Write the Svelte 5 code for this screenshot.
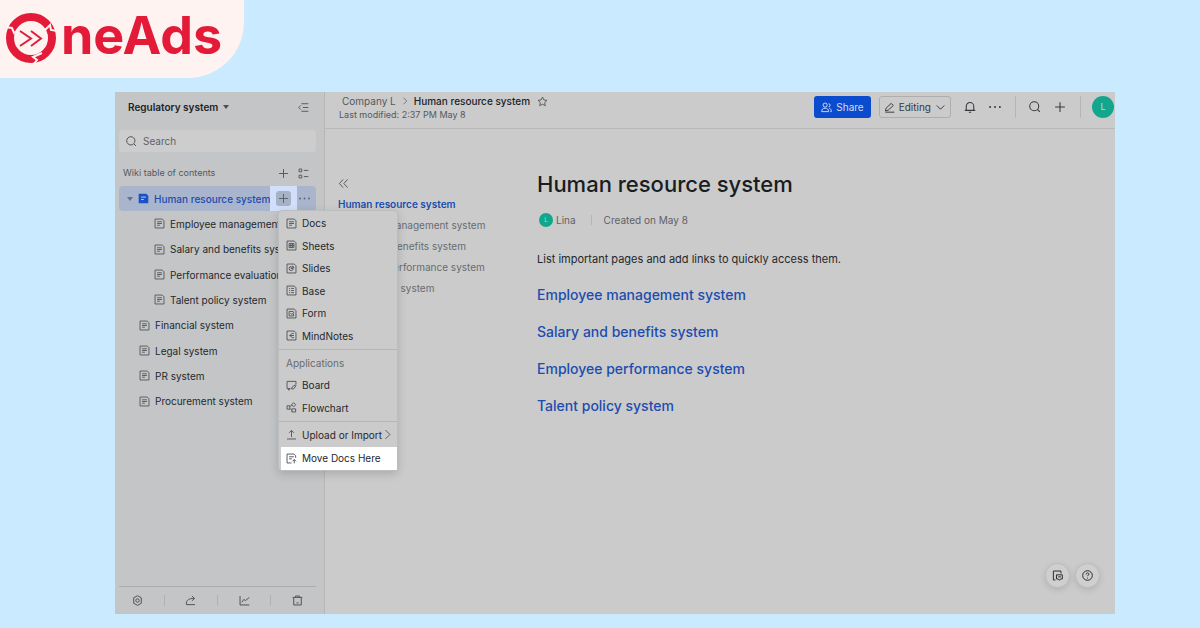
<script lang="ts">
	type TreePage = { title: string; nested?: boolean };

	const icons: Record<string, string> = {
		doc: 'M1.5 1.5h10.5l2.5 2.5v10.5h-13zM4.5 5.5h7M4.5 8h7M4.5 10.5h4',
		sheet: 'M1.5 1.5h10.5l2.5 2.5v10.5h-13zM4.5 5h7v6h-7zM4.5 8h7M7 5v6M9.3 5v6',
		slides: 'M1.5 1.5h10.5l2.5 2.5v10.5h-13zM7.5 5a3 3 0 1 0 3 3h-3zM9.5 4.5a3 3 0 0 1 2 2h-2z',
		base: 'M1.5 1.5h10.5l2.5 2.5v10.5h-13zM4.5 5h1.5M7.5 5h4M4.5 8h1.5M7.5 8h4M4.5 11h1.5M7.5 11h4',
		form: 'M1.5 1.5h10.5l2.5 2.5v10.5h-13zM11 8v3.5H4.5V5H11M6.5 7.5l2 2L11.5 6',
		mind: 'M1.5 1.5h10.5l2.5 2.5v10.5h-13zM11.5 5H9L5.5 8 9 11h2.5M5 8h6.5',
		board: 'M6.5 12.5H1.5V2h13v4.5M2.5 12.5L4.500 15v-2.500M8 13l1-3 4.500-3 1 1.500L11 13z',
		flow: 'M1.5 5.5h4v5h-4zM5.5 7l3-3M5.5 9l3 3M11 1l3 3-3 3-3-3zM8.5 10H14v4.5H8.5z',
		upload: 'M8 11.5V2M4.5 5.5L8 2l3.5 3.5M1.5 14.5h13',
		move: 'M14 7V4l-2.5-2.5h-10v13H8M4.5 5.5h7M4.5 8.5h4M12 15V9.5M9.5 12L12 9.5l2.5 2.5',
		plus: 'M8 1.5v13M1.5 8h13',
		search: 'M13 7a6 6 0 1 1-12 0 6 6 0 0 1 12 0zM11.5 11.5l3 3',
		fold: 'M5 2.5h10M7 8h8M5 13.5h10M4 5L1 8l3 3',
		outline: 'M1.5 1.5h4v4h-4zM1.5 10.5h4v4h-4zM8.5 3.5H15M8.5 12.5H15',
		left: 'M7.5 2L2 8l5.5 6M14 2L8.5 8l5.5 6',
		right: 'M5 1.5L11.5 8 5 14.5',
		down: 'M2.5 5L8 10.5 13.5 5',
		star: 'M8 1.5l2 4.2 4.5.6-3.3 3.2.8 4.6L8 11.9l-4 2.2.8-4.6L1.5 6.3 6 5.7z',
		share: 'M9 4.5a3 3 0 1 1-6 0 3 3 0 0 1 6 0zM1 14c0-3.500 2-5 5-5s5 1.500 5 5zM11 2.500a2.200 2.200 0 0 1 0 4.500M12 9c2 .5 3 2 3 5h-1.500',
		pen: 'M2 13l1-4 7.500-7 3 3L6 12zM2 14.800h13',
		bell: 'M3 12.500V7a5 5 0 0 1 10 0v5.500M1 12.500h14M6.500 15h3',
		gear: 'M8 1l5.500 3v8L8 15l-5.500-3V4zM10.500 8a2.500 2.500 0 1 1-5 0 2.500 2.500 0 0 1 5 0z',
		forward: 'M2 10.500v3.500h12.500M2 11c1-4 4-6 11-6M10 1.500L14 5l-4 3.500',
		chart: 'M1.500 1.500v13h13.500M4 10.500l3-4 2.500 1.500L15 3.500',
		trash: 'M1 3.500h14M5 3V1.500h6V3M2.500 4v10.500h11V4M6.500 11.500h3',
		note: 'M5 14.500H2v-13h11V5M6.500 7h8.500v6h-2.500L10.800 15 9 13H6.500zM9 10h4',
		help: 'M15 8A7 7 0 1 1 1 8a7 7 0 0 1 14 0zM6 6.500c0-3 4-3 4-.5 0 1.500-2 1.500-2 3M8 11.200v1.300'
	};

	const pages: TreePage[] = [
		{ title: 'Employee management system', nested: true },
		{ title: 'Salary and benefits system', nested: true },
		{ title: 'Performance evaluation system', nested: true },
		{ title: 'Talent policy system', nested: true },
		{ title: 'Financial system' },
		{ title: 'Legal system' },
		{ title: 'PR system' },
		{ title: 'Procurement system' }
	];

	const docTypes = [
		['doc', 'Docs'],
		['sheet', 'Sheets'],
		['slides', 'Slides'],
		['base', 'Base'],
		['form', 'Form'],
		['mind', 'MindNotes']
	];

	const links = [
		'Employee management system',
		'Salary and benefits system',
		'Employee performance system',
		'Talent policy system'
	];

	const tools = [
		['gear', 'Settings'],
		['forward', 'Share wiki'],
		['chart', 'Statistics'],
		['trash', 'Trash']
	];
</script>

{#snippet icon(name: string)}
	<svg class="icon" viewBox="0 0 16 16" aria-hidden="true"><path d={icons[name]} /></svg>
{/snippet}

{#snippet dots()}
	<svg class="icon dots" viewBox="0 0 16 16" aria-hidden="true">
		<circle cx="1.5" cy="8" r="1.3" />
		<circle cx="8" cy="8" r="1.3" />
		<circle cx="14.5" cy="8" r="1.3" />
	</svg>
{/snippet}

<div class="page">
	<header class="brand">
		<svg class="mark" viewBox="0 0 52 52" aria-hidden="true">
			<circle cx="26" cy="25" r="21" />
			<path class="cut" d="M0 14l7 1 2 5 4-3M40 17l5-5 1 5 6 1M37 40l-9 4 4 3-4 5" />
			<path class="arrows" d="M15 18l11 7.5L15 33M26 18l10 7.500L26 33" />
		</svg>
		<span>neAds</span>
	</header>

	<div class="app">
		<aside class="sidebar">
			<div class="space">
				<button class="space-name">Regulatory system <i class="caret"></i></button>
				<button aria-label="Collapse sidebar">{@render icon('fold')}</button>
			</div>
			<label class="search">
				{@render icon('search')}
				<input type="text" placeholder="Search" aria-label="Search" />
			</label>
			<div class="contents">
				<span>Wiki table of contents</span>
				<button aria-label="Add page">{@render icon('plus')}</button>
				<button aria-label="Outline">{@render icon('outline')}</button>
			</div>

			<ul class="tree">
				<li class="selected">
					<i class="caret"></i>
					<svg class="icon filled" viewBox="0 0 16 16" aria-hidden="true">
						<path class="sheet" d="M1 1h11l3 3v11H1z" />
						<path class="lines" d="M4.5 6h7M4.5 9.5h4" />
					</svg>
					<a href="#human">Human resource system</a>
					<div class="spot">
						<button aria-label="New page">{@render icon('plus')}</button>
						<div class="menu">
							<ul class="types">
								{#each docTypes as [name, label]}
									<li><button>{@render icon(name)}{label}</button></li>
								{/each}
							</ul>
							<ul class="apps">
								<li class="heading">Applications</li>
								<li><button>{@render icon('board')}Board</button></li>
								<li><button>{@render icon('flow')}Flowchart</button></li>
							</ul>
							<ul class="transfer">
								<li><button>{@render icon('upload')}Upload or Import{@render icon('right')}</button></li>
								<li class="active"><button>{@render icon('move')}Move Docs Here</button></li>
							</ul>
						</div>
					</div>
					<button class="more" aria-label="More">{@render dots()}</button>
				</li>
				{#each pages as page}
					<li class:nested={page.nested}>
						{@render icon('doc')}
						<a href="#page">{page.title}</a>
					</li>
				{/each}
			</ul>

			<div class="tools">
				{#each tools as [name, label], i}
					{#if i > 0}<i class="rule"></i>{/if}
					<button aria-label={label}>{@render icon(name)}</button>
				{/each}
			</div>
		</aside>

		<main>
			<div class="topbar">
				<div class="where">
					<nav class="crumbs">
						<a href="#company">Company L</a>
						{@render icon('right')}
						<a class="current" href="#human">Human resource system</a>
						<button aria-label="Favorite">{@render icon('star')}</button>
					</nav>
					<p>Last modified: 2:37 PM May 8</p>
				</div>
				<button class="share">{@render icon('share')}Share</button>
				<button class="editing">{@render icon('pen')}Editing{@render icon('down')}</button>
				<div class="group">
					<button aria-label="Notifications">{@render icon('bell')}</button>
					<button aria-label="More actions">{@render dots()}</button>
				</div>
				<div class="group">
					<button aria-label="Find">{@render icon('search')}</button>
					<button aria-label="Create">{@render icon('plus')}</button>
				</div>
				<div class="group account">
					<span class="avatar">L</span>
				</div>
			</div>

			<div class="document">
				<nav class="toc">
					<button aria-label="Hide outline">{@render icon('left')}</button>
					<a class="top" href="#human">Human resource system</a>
					{#each links as link}
						<a href="#section">{link}</a>
					{/each}
				</nav>
				<article>
					<h1>Human resource system</h1>
					<div class="meta">
						<span class="avatar small">L</span>
						<span class="author">Lina</span>
						<span class="created">Created on May 8</span>
					</div>
					<p>List important pages and add links to quickly access them.</p>
					{#each links as link}
						<a href="#section">{link}</a>
					{/each}
				</article>
			</div>

			<div class="floating">
				<button aria-label="Comments">{@render icon('note')}</button>
				<button aria-label="Help">{@render icon('help')}</button>
			</div>
		</main>
	</div>
</div>

<style>
	:global(body) {
		background: #c9eaff;
	}

	.page {
		display: flex;
		flex-direction: column;
		gap: 14px;
		min-height: 100vh;
		padding-bottom: 14px;
		box-sizing: border-box;
		font-family: Inter, 'Liberation Sans', sans-serif;
		font-size: 10px;
		line-height: 14px;
		color: #25282c;
	}

	button,
	input {
		font: inherit;
		color: inherit;
		background: none;
		border: 0;
		padding: 0;
	}

	button {
		display: flex;
		align-items: center;
		justify-content: center;
	}

	a {
		color: inherit;
		text-decoration: none;
	}

	ul {
		list-style: none;
		margin: 0;
		padding: 0;
	}

	p {
		margin: 0;
	}

	.icon {
		width: 11px;
		height: 11px;
		flex: none;
		fill: none;
		stroke: currentColor;
		stroke-width: 1.4;
	}

	.icon.dots {
		fill: currentColor;
		stroke: none;
	}

	.caret {
		width: 0;
		border: 3px solid transparent;
		border-top: 4px solid #4a4d51;
		border-bottom: 0;
	}

	.brand {
		display: flex;
		align-items: center;
		align-self: flex-start;
		height: 78px;
		padding: 0 22px 0 5px;
		box-sizing: border-box;
		border-bottom-right-radius: 56px;
		background: #fff3f2;
		color: #e31b39;
		font-size: 52px;
		line-height: 64px;
		font-weight: 700;
	}

	.brand span {
		margin-top: -6px;
	}

	.mark {
		width: 52px;
		height: 52px;
		margin-right: 4px;
		fill: none;
		stroke: currentColor;
	}

	.mark circle {
		stroke-width: 8;
	}

	.mark .cut {
		stroke: #fff3f2;
		stroke-width: 2;
	}

	.mark .arrows {
		stroke-width: 2;
	}

	.app {
		display: flex;
		flex: 1;
		margin: 0 85px 0 115px;
		background: #cbcbcb;
	}

	.sidebar {
		display: flex;
		flex-direction: column;
		width: 210px;
		box-sizing: border-box;
		padding: 0 8px 0 4px;
		border-right: 1px solid #b5b6b8;
		background: #c4c5c7;
	}

	.space {
		display: flex;
		align-items: center;
		justify-content: space-between;
		height: 30px;
		padding: 0 7px 0 9px;
		color: #55585d;
	}

	.space-name {
		gap: 5px;
		font-weight: 600;
		color: #202327;
	}

	.search {
		display: flex;
		align-items: center;
		gap: 6px;
		height: 22px;
		margin: 8px 0 10px;
		padding: 0 7px;
		border-radius: 3px;
		background: #cdcdcd;
		color: #4d5054;
	}

	.search input {
		flex: 1;
		min-width: 0;
	}

	.search input::placeholder {
		color: #606367;
		opacity: 1;
	}

	.contents {
		display: flex;
		align-items: center;
		gap: 9px;
		height: 22px;
		padding: 0 7px 0 4px;
		font-size: 9px;
		color: #55585d;
	}

	.contents span {
		flex: 1;
	}

	.tree {
		display: grid;
		grid-template-columns: minmax(0, 1fr);
		grid-auto-rows: 1fr;
		height: 228px;
		margin-top: 2px;
	}

	.tree > li {
		display: flex;
		align-items: center;
		gap: 5px;
		padding-left: 20px;
	}

	.tree > li > .icon {
		color: #5a5d61;
	}

	.tree > li.nested {
		padding-left: 35px;
	}

	.tree > li > a {
		flex: 1;
		min-width: 0;
		white-space: nowrap;
	}

	.tree > .selected {
		padding-left: 8px;
		border-radius: 4px;
		background: #a9b5cc;
		color: #1c4cb0;
		font-weight: 500;
	}

	.tree .icon.filled {
		stroke: none;
	}

	.filled .sheet {
		fill: #1c50c4;
	}

	.filled .lines {
		stroke: #c5cee0;
	}

	.selected .caret {
		border-top-color: #65718a;
	}

	.spot {
		position: relative;
		align-self: stretch;
		display: grid;
		place-items: center;
		width: 27px;
		margin-left: -5px;
		background: #d2dffb;
		color: #59606f;
	}

	.spot > button {
		width: 15px;
		height: 15px;
		border-radius: 3px;
		background: #a8b2c6;
	}

	.tree .more {
		width: 15px;
		margin: 0 4px 0 -5px;
		color: #59606f;
	}

	.menu {
		position: absolute;
		z-index: 1;
		top: 24px;
		left: 8px;
		width: 120px;
		box-sizing: border-box;
		border: 1px solid #bcbdbe;
		border-radius: 4px;
		background: #cbcbcb;
		box-shadow: 0 3px 10px rgb(0 0 0 / 16%);
		color: #25282c;
		font-weight: 400;
	}

	.menu ul {
		display: grid;
		grid-auto-rows: 1fr;
	}

	.menu ul + ul {
		border-top: 1px solid #b5b5b5;
	}

	.types {
		height: 135px;
		padding: 1px 0 2px;
	}

	.menu .apps {
		height: 67px;
		padding: 2px 0;
	}

	.menu .transfer {
		height: 47px;
		padding-top: 1px;
	}

	.menu button {
		justify-content: flex-start;
		gap: 5px;
		width: 100%;
		height: 100%;
		padding-left: 7px;
		white-space: nowrap;
	}

	.menu .icon {
		color: #55585d;
	}

	.menu button .icon + .icon {
		margin-left: -5px;
	}

	.heading {
		align-self: center;
		padding-left: 7px;
		color: #686b70;
	}

	.active {
		margin-left: 2px;
		background: #fff;
	}

	.active button {
		padding-left: 5px;
	}

	.tools {
		display: flex;
		align-items: center;
		justify-content: space-between;
		height: 27px;
		margin-top: auto;
		padding: 0 13px;
		border-top: 1px solid #abadaf;
		color: #4d5054;
	}

	.rule {
		width: 1px;
		height: 11px;
		background: #afb1b3;
	}

	main {
		position: relative;
		flex: 1;
		min-width: 0;
	}

	.topbar {
		display: flex;
		align-items: center;
		height: 37px;
		padding: 0 1px 6px 14px;
		box-sizing: border-box;
		border-bottom: 1px solid #b9b9b9;
		color: #36393d;
	}

	.where {
		flex: 1;
		padding-top: 2px;
		font-size: 9px;
		color: #55585d;
	}

	.crumbs {
		display: flex;
		align-items: center;
		gap: 5px;
		padding-left: 3px;
		font-size: 10px;
	}

	.crumbs > .icon {
		width: 8px;
		height: 8px;
	}

	.crumbs .current {
		margin-right: 2px;
		font-weight: 500;
		color: #202327;
	}

	.share,
	.editing {
		gap: 4px;
		height: 22px;
		padding: 0 7px;
		border-radius: 3px;
	}

	.share {
		margin-right: 8px;
		background: #0b4bcd;
		color: #d2dcf0;
	}

	.editing {
		padding: 0 4px;
		border: 1px solid #adaeaf;
	}

	.group {
		display: flex;
		align-items: center;
		gap: 13px;
		height: 22px;
		padding: 0 14px 0 13px;
	}

	.group + .group {
		border-left: 1px solid #b5b5b5;
	}

	.group .icon {
		width: 12px;
		height: 12px;
	}

	.group.account {
		padding: 0 0 0 11px;
	}

	.avatar {
		display: grid;
		place-items: center;
		width: 22px;
		height: 22px;
		border-radius: 50%;
		background: #12a78d;
		color: #b9ddd3;
		font-size: 9px;
	}

	.document {
		display: grid;
		grid-template-columns: 199px 1fr;
		padding-left: 13px;
	}

	.toc {
		display: flex;
		flex-direction: column;
		align-items: flex-start;
		padding-top: 49px;
		line-height: 21px;
		color: #686b70;
	}

	.toc button {
		height: 11px;
		margin-bottom: 5px;
		color: #55585d;
	}

	.toc .top {
		font-weight: 600;
		color: #1c4cb0;
	}

	article {
		display: flex;
		flex-direction: column;
		align-items: flex-start;
		padding-top: 39px;
	}

	h1 {
		margin: 0;
		font-size: 22px;
		line-height: 32px;
		font-weight: 500;
		color: #191d22;
	}

	.meta {
		display: flex;
		align-items: center;
		gap: 3px;
		height: 20px;
		margin: 10px 0 21px;
		padding-left: 2px;
		color: #5f6266;
	}

	.avatar.small {
		width: 14px;
		height: 14px;
		font-size: 6px;
	}

	.created {
		margin-left: 12px;
		padding-left: 12px;
		border-left: 1px solid #b5b5b5;
		line-height: 10px;
	}

	article p {
		margin-bottom: 18px;
		font-size: 11px;
		line-height: 16px;
	}

	article > a {
		margin-bottom: 17px;
		font-size: 14px;
		line-height: 20px;
		font-weight: 500;
		color: #1c4cb0;
	}

	.floating {
		position: absolute;
		right: 15px;
		bottom: 26px;
		display: flex;
		gap: 5px;
	}

	.floating button {
		width: 25px;
		height: 25px;
		border: 1px solid #bdbdbd;
		border-radius: 50%;
		background: #cfcfcf;
		box-shadow: 0 2px 6px rgb(0 0 0 / 12%);
	}
</style>
